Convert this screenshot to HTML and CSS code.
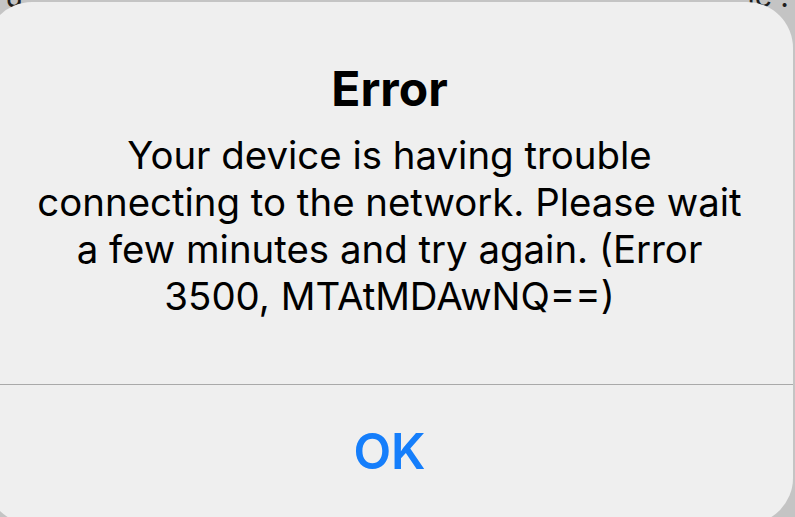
FILE: index.html
```
<!DOCTYPE html>
<html lang="en">
<head>
<meta charset="utf-8">
<title>Error</title>
<link rel="stylesheet" href="styles.css">
</head>
<body>
<div class="backdrop">
  <span class="bg-text bg-left">ru</span>
  <span class="bg-text bg-right">ic .</span>
</div>
<div class="alert" role="alertdialog">
  <div class="alert-body">
    <h1 class="alert-title">Error</h1>
    <p class="alert-message">Your device is having trouble<br>connecting to the network. Please wait<br>a few minutes and try again. (Error<br>3500, MTAtMDAwNQ==)</p>
  </div>
  <div class="alert-divider"></div>
  <div class="alert-actions">
    <button class="alert-button">OK</button>
  </div>
</div>
</body>
</html>
```
FILE: styles.css
```
html, body {
  margin: 0;
  padding: 0;
  width: 795px;
  height: 517px;
  overflow: hidden;
}
body {
  background: #c4c4c4;
  font-family: Inter, "Noto Sans", sans-serif;
  position: relative;
}
.backdrop {
  position: absolute;
  inset: 0;
}
.bg-text {
  position: absolute;
  font-family: Inter, sans-serif;
  font-size: 30px;
  color: #1e1e1e;
  top: -22px;
}
.bg-left {
  left: -6px;
}
.bg-right {
  right: 6px;
}
.alert {
  position: relative;
  margin-left: -14px;
  margin-top: 2px;
  width: 807px;
  height: 522px;
  border-radius: 46px;
  background: #efefef;
  display: flex;
  flex-direction: column;
}
.alert-body {
  padding-top: 59px;
  height: 320px;
  box-sizing: border-box;
  text-align: center;
}
.alert-title {
  margin: 0;
  font-size: 48px;
  line-height: 56px;
  font-weight: 700;
  color: #000;
}
.alert-message {
  margin: 15px 0 0;
  font-size: 38.4px;
  line-height: 47px;
  font-weight: 400;
  color: #000;
}
.alert-divider {
  margin-top: 62px;
  height: 1px;
  background: #a9a9a9;
}
.alert-actions {
  height: 134px;
  display: flex;
  align-items: center;
  justify-content: center;
}
.alert-button {
  border: 0;
  background: none;
  padding: 0;
  font-family: Inter, "Noto Sans", sans-serif;
  font-size: 49px;
  font-weight: 600;
  color: #157efb;
  line-height: 60px;
}
```
